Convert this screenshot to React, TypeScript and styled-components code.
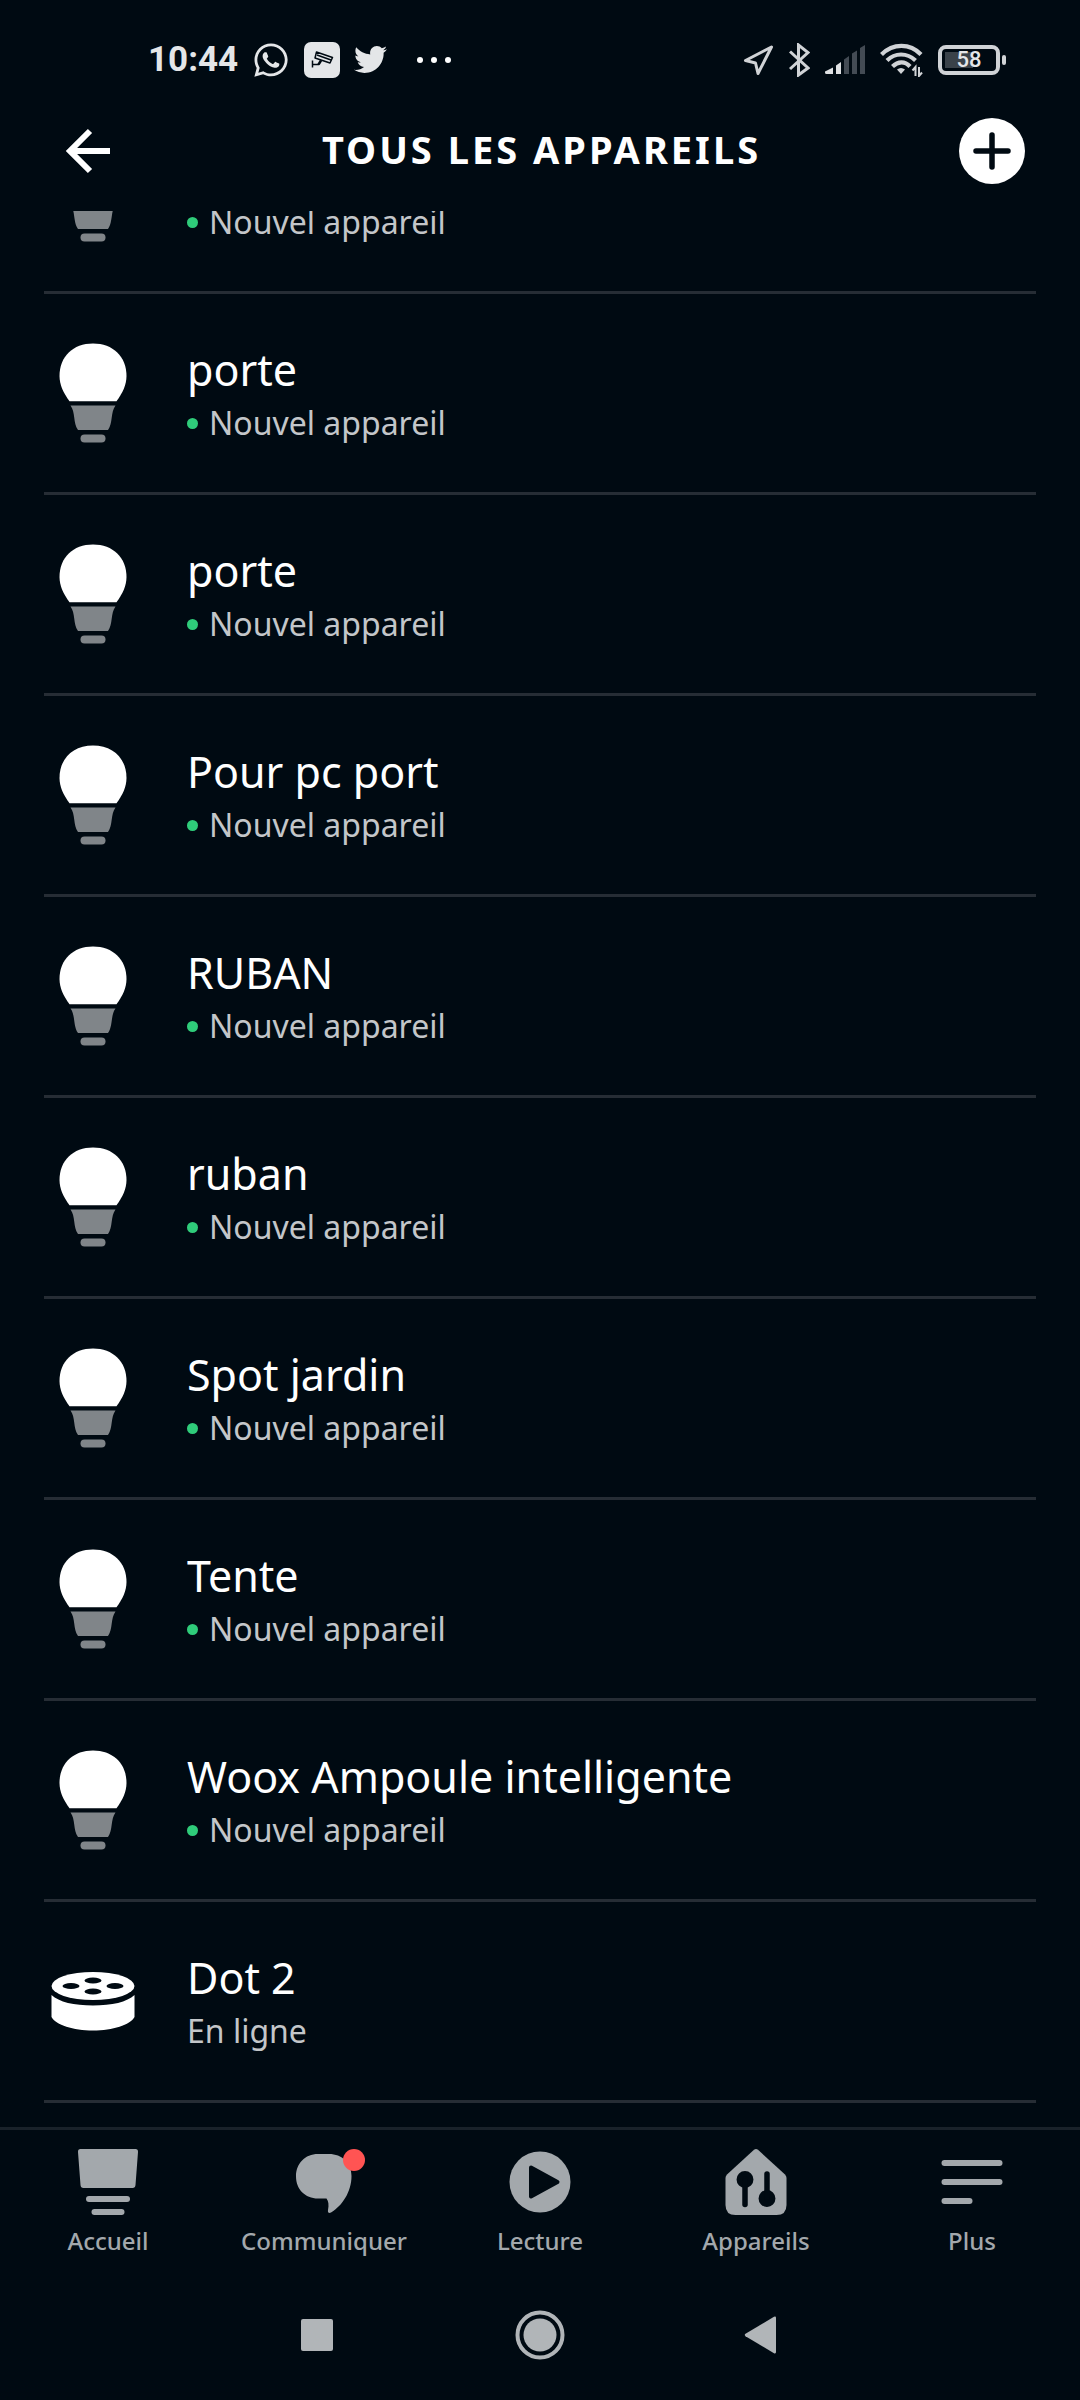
import React from "react";
import styled, { createGlobalStyle } from "styled-components";
import { FaWhatsapp, FaTwitter } from "react-icons/fa";

const color = {
  bg: "#000a12",
  text: "#ffffff",
  muted: "#c3c6c9",
  nav: "#a3a8ac",
  system: "#b1b5b8",
  status: "#e4e6e8",
  line: "#262d35",
  navLine: "#19222a",
  online: "#2fcc7a",
  alert: "#ff5453",
  socket: "#808589",
};

const GlobalStyle = createGlobalStyle`
  *, *::before, *::after { box-sizing: border-box; }
  body { margin: 0; background: ${color.bg}; }
  button { margin: 0; padding: 0; border: 0; background: none; color: inherit; font: inherit; cursor: pointer; }
  svg { display: block; flex: none; }
`;

const Screen = styled.div`
  display: flex;
  flex-direction: column;
  height: 100vh;
  background: ${color.bg};
  color: ${color.text};
  font-family: "Noto Sans", "Open Sans", sans-serif;
`;

const StatusBar = styled.div`
  display: flex;
  flex: none;
  align-items: center;
  justify-content: space-between;
  height: 91px;
  padding: 28px 74px 0 148px;
  color: ${color.status};
`;

const StatusGroup = styled.div<{ $gap: number }>`
  display: flex;
  align-items: center;
  gap: ${(p) => p.$gap}px;
`;

const Clock = styled.time`
  font: 700 35px/40px Roboto, sans-serif;
`;

const CameraBadge = styled.span`
  display: flex;
  align-items: center;
  justify-content: center;
  width: 36px;
  height: 36px;
  border-radius: 7px;
  background: ${color.status};
  color: ${color.bg};
`;

const Dots = styled.span`
  display: flex;
  gap: 8px;
  margin-left: 16px;
`;

const Dot = styled.i`
  width: 6px;
  height: 6px;
  border-radius: 50%;
  background: #fff;
`;

const Battery = styled.span`
  display: flex;
  align-items: center;
  gap: 2px;
`;

const BatteryCase = styled.span`
  display: flex;
  align-items: center;
  justify-content: center;
  width: 62px;
  height: 30px;
  border: 4px solid #d0d3d6;
  border-radius: 8px;
  background: linear-gradient(90deg, #3a4249 28px, transparent 28px) 3px 3px / 48px 16px no-repeat;
  font: 500 22px/24px Roboto, sans-serif;
`;

const BatteryTip = styled.span`
  width: 4px;
  height: 10px;
  border-radius: 2px;
  background: #d0d3d6;
`;

const Header = styled.header`
  display: grid;
  flex: none;
  grid-template-columns: 1fr auto 1fr;
  align-items: center;
  height: 120px;
  padding: 0 55px 0 58px;
`;

const HeaderButton = styled.button<{ $end?: boolean }>`
  display: flex;
  justify-self: ${(p) => (p.$end ? "end" : "start")};
`;

const Title = styled.h1`
  margin: 0;
  padding-bottom: 4px;
  font-size: 38px;
  font-weight: 700;
  line-height: 52px;
  letter-spacing: 3px;
  text-transform: uppercase;
`;

const Content = styled.main`
  display: flex;
  flex: 1;
  flex-direction: column;
  justify-content: flex-end;
  min-height: 0;
  overflow: hidden;
  padding: 0 44px 24px;
`;

const DeviceList = styled.ul`
  margin: 0;
  padding: 0;
  list-style: none;
`;

const DeviceItem = styled.li`
  border-bottom: 3px solid ${color.line};
`;

const DeviceButton = styled.button`
  display: flex;
  align-items: center;
  gap: 48px;
  width: 100%;
  height: 198px;
  padding-left: 3px;
  text-align: left;
`;

const DeviceIcon = styled.span`
  display: flex;
  justify-content: center;
  width: 92px;
`;

const DeviceText = styled.span`
  display: flex;
  flex-direction: column;
`;

const DeviceName = styled.span`
  min-height: 60px;
  font-size: 43px;
  line-height: 60px;
`;

const DeviceStatus = styled.span`
  display: flex;
  align-items: center;
  gap: 11px;
  color: ${color.muted};
  font-size: 32px;
  line-height: 46px;
`;

const OnlineDot = styled.i`
  width: 11px;
  height: 11px;
  border-radius: 50%;
  background: ${color.online};
`;

const TabBar = styled.nav`
  display: grid;
  flex: none;
  grid-template-columns: repeat(5, 1fr);
  align-items: start;
  height: 143px;
  padding-top: 19px;
  border-top: 3px solid ${color.navLine};
  color: ${color.nav};
`;

const Tab = styled.button`
  display: flex;
  flex-direction: column;
  align-items: center;
  gap: 10px;
`;

const TabLabel = styled.span`
  font-size: 24px;
  font-weight: 500;
  line-height: 32px;
`;

const SystemBar = styled.div`
  display: flex;
  flex: none;
  align-items: center;
  justify-content: center;
  gap: 160px;
  height: 130px;
  color: ${color.system};
`;

const BulbIcon = () => (
  <svg width="68" height="100" viewBox="0 0 68 100" aria-hidden="true">
    <path
      fill="#fff"
      d="M34 0.500C14 0.500 0.500 13.500 0.500 33C0.500 42 4.500 50 10.500 58.200H57.500C63.500 50 67.500 42 67.500 33C67.500 13.500 54 0.500 34 0.500Z"
    />
    <path
      fill={color.socket}
      d="M11.500 62.500H56.500C51.500 69 54 80 49 87H19C14 80 16.500 69 11.500 62.500Z"
    />
    <rect x="21.500" y="91.500" width="25" height="8" rx="4" fill={color.socket} />
  </svg>
);

const EchoIcon = () => (
  <svg width="84" height="60" viewBox="0 0 84 60" aria-hidden="true">
    <ellipse cx="42" cy="15" rx="41.500" ry="14" fill="#fff" />
    <path fill="#fff" d="M0.500 24C8 31 23 34.500 42 34.500S76 31 83.500 24V46C79 54 62 59.500 42 59.500S5 54 0.500 46Z" />
    <g fill={color.bg}>
      <ellipse cx="42" cy="9.500" rx="8.500" ry="3" />
      <ellipse cx="20" cy="15" rx="8.500" ry="3" />
      <ellipse cx="64" cy="15" rx="8.500" ry="3" />
      <ellipse cx="42" cy="20.500" rx="8.500" ry="3" />
    </g>
  </svg>
);

const HomeIcon = () => (
  <svg width="66" height="66" viewBox="0 0 66 66" fill="currentColor" aria-hidden="true">
    <path d="M5.500 0H60.500Q63.200 0 63 3L60.500 36Q60.300 39 57.500 39H8.500Q5.700 39 5.500 36L3 3Q2.800 0 5.500 0Z" />
    <rect x="11" y="47" width="44" height="6" rx="3" />
    <rect x="16.500" y="60" width="33" height="6" rx="3" />
  </svg>
);

const ChatIcon = () => (
  <svg width="82" height="66" viewBox="0 0 82 66" fill="currentColor" aria-hidden="true">
    <path d="M35 5H46C59 5 68.500 14 68.500 27C68.500 43 59 57 48 63.500C46 64.500 44.500 63.500 45 61C46 56 45.500 52 43.500 49.500H35C22 49.500 13 40 13 27.500C13 14.500 22 5 35 5Z" />
    <circle cx="71" cy="11" r="11" fill={color.alert} />
  </svg>
);

const PlayIcon = () => (
  <svg width="66" height="66" viewBox="0 0 66 66" aria-hidden="true">
    <circle cx="33" cy="33" r="30.500" fill="currentColor" />
    <path
      fill={color.bg}
      stroke={color.bg}
      strokeWidth="4"
      strokeLinejoin="round"
      d="M24 18.500L50.500 33L24 47.500Z"
    />
  </svg>
);

const HouseIcon = () => (
  <svg width="66" height="66" viewBox="0 0 66 66" aria-hidden="true">
    <path
      fill="currentColor"
      d="M31 0.800Q33 -0.800 35 0.800L62 25.500Q63.500 27 63.500 29V56Q63.500 66 53.500 66H12.500Q2.500 66 2.500 56V29Q2.500 27 4 25.500Z"
    />
    <g fill={color.bg} stroke={color.bg} strokeWidth="5.500" strokeLinecap="round">
      <circle cx="22" cy="30.500" r="5.700" />
      <path d="M22 32V55.500" />
      <circle cx="44" cy="49.500" r="5.700" />
      <path d="M44 25V48" />
    </g>
  </svg>
);

const MoreIcon = () => (
  <svg width="66" height="66" viewBox="0 0 66 66" fill="currentColor" aria-hidden="true">
    <rect x="2.500" y="11" width="61" height="6" rx="3" />
    <rect x="2.500" y="30" width="61" height="6" rx="3" />
    <rect x="2.500" y="49" width="31" height="6" rx="3" />
  </svg>
);

const CameraIcon = () => (
  <svg width="26" height="22" viewBox="0 0 26 22" fill="none" stroke="currentColor" aria-hidden="true">
    <path strokeWidth="1.500" strokeLinejoin="round" d="M7.500 3L23.500 8.500L21 14L6 9ZM8 6L22 11" />
    <path strokeWidth="2.500" d="M12 11.500L9.500 15.500" />
    <path strokeWidth="1.500" d="M10 15.500H3.500M3.500 11.500V18.500" />
  </svg>
);

const LocationIcon = () => (
  <svg width="31" height="32" viewBox="0 0 31 32" fill="none" stroke="#d0d3d6" strokeWidth="3" strokeLinejoin="round" aria-hidden="true">
    <path d="M28.500 3L2.500 16.500L12.500 19L15 29.500Z" />
  </svg>
);

const BluetoothIcon = () => (
  <svg width="21" height="34" viewBox="0 0 21 34" fill="none" stroke="#d0d3d6" strokeWidth="3" aria-hidden="true">
    <path d="M1 8.500L19 25L9.500 32V2L19 9.500L1 26" />
  </svg>
);

const SignalIcon = () => (
  <svg width="40" height="30" viewBox="0 0 40 30" aria-hidden="true">
    <path fill="#dfe1e3" d="M0 26.500L8 22.500V29H1.500Q0 29 0 27.500ZM11 20.500L16 17V29H11Z" />
    <path fill="#434b54" d="M19 14.500L24 11V29H19ZM27 8.500L32 5.500V29H27ZM35 3L40 0V29H35Z" />
  </svg>
);

const WifiIcon = () => (
  <svg width="43" height="34" viewBox="0 0 43 34" fill="none" stroke="#d0d3d6" aria-hidden="true">
    <g strokeWidth="4.200">
      <path d="M1.500 11.500C13 0 30 0 41 11.500" />
      <path d="M7 17.500C15 9.500 27 9.500 35.500 17.500" />
      <path d="M12.500 23.500C18 18 25 18 30 23.500" />
    </g>
    <path fill="#d0d3d6" stroke="none" d="M17 26.500Q21 23.500 25 26.500L21 31Z" />
    <path strokeWidth="2" d="M35.500 33V24L32.500 27.500M39 24V33L42 29.500" />
  </svg>
);

const devices = [
  { name: "", kind: "bulb" },
  { name: "porte", kind: "bulb" },
  { name: "porte", kind: "bulb" },
  { name: "Pour pc port", kind: "bulb" },
  { name: "RUBAN", kind: "bulb" },
  { name: "ruban", kind: "bulb" },
  { name: "Spot jardin", kind: "bulb" },
  { name: "Tente", kind: "bulb" },
  { name: "Woox Ampoule intelligente", kind: "bulb" },
  { name: "Dot 2", kind: "echo" },
];

const tabs = [
  { label: "Accueil", Icon: HomeIcon },
  { label: "Communiquer", Icon: ChatIcon },
  { label: "Lecture", Icon: PlayIcon },
  { label: "Appareils", Icon: HouseIcon },
  { label: "Plus", Icon: MoreIcon },
];

export default function App() {
  return (
    <Screen>
      <GlobalStyle />
      <StatusBar>
        <StatusGroup $gap={14}>
          <Clock>10:44</Clock>
          <FaWhatsapp size={38} />
          <CameraBadge>
            <CameraIcon />
          </CameraBadge>
          <FaTwitter size={33} />
          <Dots>
            <Dot />
            <Dot />
            <Dot />
          </Dots>
        </StatusGroup>
        <StatusGroup $gap={15}>
          <LocationIcon />
          <BluetoothIcon />
          <SignalIcon />
          <WifiIcon />
          <Battery>
            <BatteryCase>58</BatteryCase>
            <BatteryTip />
          </Battery>
        </StatusGroup>
      </StatusBar>

      <Header>
        <HeaderButton>
          <svg width="60" height="60" viewBox="0 0 60 60" fill="none" stroke="#fff" strokeWidth="6" aria-hidden="true">
            <path d="M52 30H11M32 10L12 30L32 50" />
          </svg>
        </HeaderButton>
        <Title>Tous les appareils</Title>
        <HeaderButton $end>
          <svg width="66" height="66" viewBox="0 0 66 66" aria-hidden="true">
            <circle cx="33" cy="33" r="33" fill="#fff" />
            <path d="M33 17V49M17 33H49" stroke={color.bg} strokeWidth="5.500" strokeLinecap="round" />
          </svg>
        </HeaderButton>
      </Header>

      <Content>
        <DeviceList>
          {devices.map(({ name, kind }, i) => (
            <DeviceItem key={i}>
              <DeviceButton>
                <DeviceIcon>{kind === "bulb" ? <BulbIcon /> : <EchoIcon />}</DeviceIcon>
                <DeviceText>
                  <DeviceName>{name}</DeviceName>
                  {kind === "bulb" ? (
                    <DeviceStatus>
                      <OnlineDot />
                      Nouvel appareil
                    </DeviceStatus>
                  ) : (
                    <DeviceStatus>En ligne</DeviceStatus>
                  )}
                </DeviceText>
              </DeviceButton>
            </DeviceItem>
          ))}
        </DeviceList>
      </Content>

      <TabBar>
        {tabs.map(({ label, Icon }) => (
          <Tab key={label}>
            <Icon />
            <TabLabel>{label}</TabLabel>
          </Tab>
        ))}
      </TabBar>

      <SystemBar>
        <button>
          <svg width="62" height="62" viewBox="0 0 62 62" fill="currentColor" aria-hidden="true">
            <rect x="14" y="15" width="32" height="32" rx="2" />
          </svg>
        </button>
        <button>
          <svg width="62" height="62" viewBox="0 0 62 62" fill="currentColor" aria-hidden="true">
            <circle cx="31" cy="31" r="22.500" fill="none" stroke="currentColor" strokeWidth="4" />
            <circle cx="31" cy="31" r="16.500" />
          </svg>
        </button>
        <button>
          <svg width="62" height="62" viewBox="0 0 62 62" fill="currentColor" aria-hidden="true">
            <path d="M14.500 29.800L43 12.800Q45 12 45 14V48Q45 50 43 49.200L14.500 32.200Q13 31 14.500 29.800Z" />
          </svg>
        </button>
      </SystemBar>
    </Screen>
  );
}
